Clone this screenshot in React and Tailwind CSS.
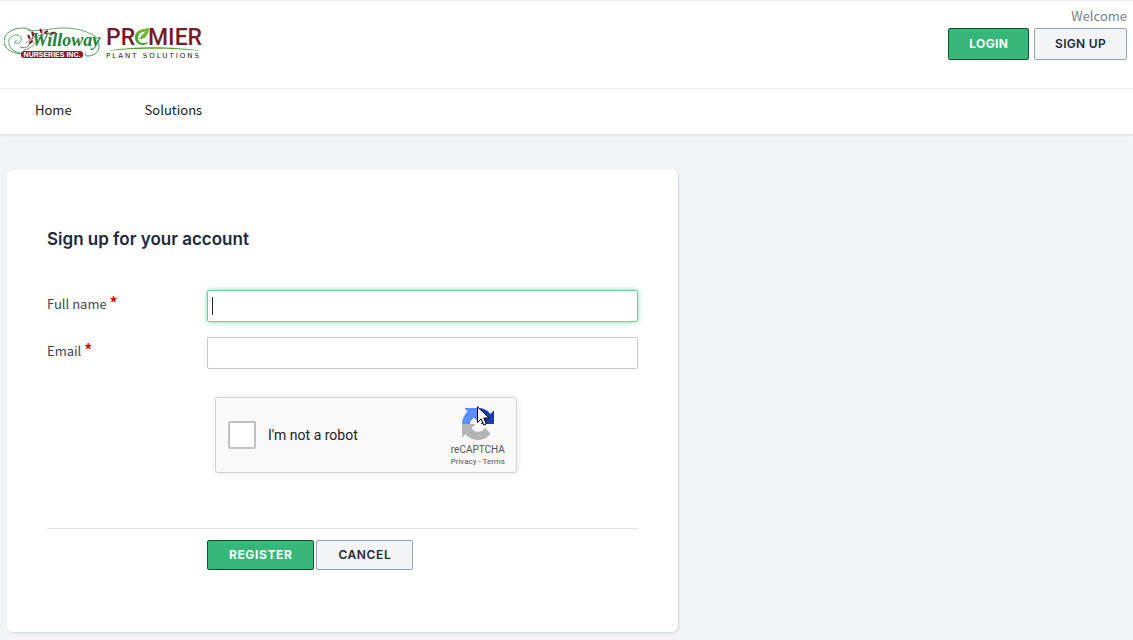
import React from "react";

const BODY = "font-['Noto_Sans_CJK_SC','Noto_Sans',sans-serif]";
const HEAD = "font-[Inter,sans-serif]";
const PRIMARY = "rounded-xs border border-[#14532d] bg-[#36b678] text-white";
const SECONDARY = "rounded-xs border border-[#94a3b8] bg-[#f3f4f6] text-[#1e293b]";

function WillowayLogo() {
  return (
    <svg width="98" height="36" viewBox="0 0 98 36" role="img" aria-label="Willoway Nurseries Inc.">
      <g fill="none" stroke="#3d9147" strokeLinecap="round">
        <path strokeWidth="0.8" d="M24 5C37 7 46 3 60 3C76 3 88 8 94 14" />
        <path strokeWidth="0.9" d="M18 29C6 28 0 23 0 16C0 8 9 3 19 3C29 3 30 12 27 17C25 22 20 24 16 22" />
        <path strokeWidth="0.8" d="M16 28C6 26 4 19 5 15C6 10 14 8 17 12C19 16 14 20 11 18C10 16 12 15 13 16" />
        <path strokeWidth="0.8" d="M20 25C27 24 32 18 36 12" />
        <path strokeWidth="1" d="M93 15C98 21 94 31 84 31C81 31 80 29 82 28" />
      </g>
      <g fill="#84202f">
        <ellipse cx="25" cy="12" rx="1.2" ry="2.6" transform="rotate(-25 25 12)" />
        <ellipse cx="29" cy="9" rx="1.2" ry="2.8" transform="rotate(-10 29 9)" />
        <ellipse cx="37" cy="6" rx="1.2" ry="2.6" transform="rotate(-20 37 6)" />
        <ellipse cx="42" cy="7" rx="1.2" ry="2.6" transform="rotate(60 42 7)" />
        <ellipse cx="49" cy="8" rx="1.2" ry="3" transform="rotate(80 49 8)" />
        <ellipse cx="27" cy="17" rx="1.2" ry="2.6" transform="rotate(60 27 17)" />
      </g>
      <path d="M22 18C28 13 36 9 46 8" fill="none" stroke="#84202f" strokeWidth="0.6" />
      <text x="28" y="21" fontFamily="Liberation Serif, serif" fontStyle="italic" fontWeight="700" fontSize="18" fill="#23803a">Willoway</text>
      <rect x="17" y="26" width="62" height="7" rx="3" fill="#8b1d2c" />
      <text x="48" y="32" textAnchor="middle" fontFamily="Liberation Sans, sans-serif" fontWeight="700" fontSize="7" fill="#fff">NURSERIES INC.</text>
    </svg>
  );
}

function PremierLogo() {
  return (
    <svg width="98" height="36" viewBox="0 0 98 36" role="img" aria-label="Premier Plant Solutions">
      <g fontFamily="Roboto, sans-serif" fontWeight="500" fontSize="23" fill="#741c2b">
        <text x="0" y="20">PR</text>
        <text x="42" y="20">MIER</text>
      </g>
      <path d="M29 12C29 7 33 4 42 4C42 11 39 14 33 14L40 6C34 7 32 10 32 13C32 18 37 19 42 17L41 19C34 22 29 18 29 12Z" fill="#4ca32d" />
      <path d="M30 10C31 6 35 4 43 3C43 9 40 13 33 14L40 6C35 7 32 9 30 10Z" fill="#70b72c" />
      <path d="M1 26C25 21 69 21 95 26C69 23 25 23 1 26Z" fill="#55a23a" />
      <text x="0" y="33" fontFamily="DejaVu Sans, sans-serif" fontSize="7" letterSpacing="2" fill="#1a1a1a">PLANT SOLUTIONS</text>
    </svg>
  );
}

function RecaptchaMark() {
  return (
    <svg width="32" height="32" viewBox="0 0 64 64" aria-hidden="true">
      <path fill="#1c3aa9" d="M64 31.96a32 32 0 0 0-.03-1.37V4.57l-7.2 7.2A31.94 31.94 0 0 0 32.05.06a31.95 31.95 0 0 0-25.4 12.53l11.8 11.92a15.6 15.6 0 0 1 4.78-5.36c2.06-1.6 4.98-2.92 9.03-2.92.49 0 .87.06 1.14.16 5.02.4 9.37 3.17 11.93 7.19l-8.35 8.35L64 31.96" />
      <path fill="#5b8df6" d="M31.86.06a32 32 0 0 0-1.37.04H4.47l7.19 7.19A31.94 31.94 0 0 0 0 32.01a31.95 31.95 0 0 0 12.53 25.4l11.87-11.8a15.6 15.6 0 0 1-5.36-4.78c-1.6-2.06-2.92-4.98-2.92-9.03 0-.49.06-.87.16-1.14.4-5.02 3.17-9.37 7.19-11.93l8.35 8.35.04-27.02" />
      <path fill="#b4b4b4" d="M.06 32a32 32 0 0 0 .03 1.37v26.02l7.2-7.2A31.94 31.94 0 0 0 32 63.9a31.95 31.95 0 0 0 25.4-12.53L45.6 39.45a15.6 15.6 0 0 1-4.78 5.36c-2.06 1.6-4.98 2.92-9.03 2.92-.49 0-.87-.06-1.14-.16-5.02-.4-9.37-3.17-11.93-7.19l8.35-8.35L.06 32" />
    </svg>
  );
}

function Field({ id, label, type, focused }) {
  return (
    <div className="flex">
      <label htmlFor={id} className="w-40 shrink-0 pt-1 text-[13px] leading-5 text-[#3f4650]">
        {label} <span className="text-base leading-4 font-bold text-[#cc1212]">*</span>
      </label>
      <div className="relative grow">
        <input
          id={id}
          type={type}
          required
          autoFocus={focused}
          placeholder=" "
          className="peer block h-8 w-full rounded-xs border border-[#c8c8c8] bg-white px-1 text-[13px] text-[#1e293b] outline-none focus:border-[#74cda0] focus:shadow-[0_0_5px_#36b67899]"
        />
        <span className="pointer-events-none absolute top-[7px] left-[5px] hidden h-[18px] w-px bg-[#1e293b] peer-focus:peer-placeholder-shown:block" />
      </div>
    </div>
  );
}

export default function App() {
  return (
    <div className={`min-h-screen bg-[#f3f4f6] ${BODY}`}>
      <header className="border-b border-[#dfe1e4] bg-white shadow-xs">
        <div className="flex h-[89px] items-start justify-between border-y border-[#ebebeb] pr-1.5 pl-1">
          <a href="#home" className="flex gap-1 pt-6">
            <WillowayLogo />
            <PremierLogo />
          </a>
          <div className="flex flex-col items-end gap-0.5 pt-[5px]">
            <span className="text-[13px] leading-5 text-[#777f87]">Welcome</span>
            <div className={`flex gap-[5px] text-xs ${HEAD}`}>
              <button type="button" className={`h-8 px-5 font-bold tracking-wide ${PRIMARY}`}>LOGIN</button>
              <button type="button" className={`h-8 px-5 font-semibold tracking-wide ${SECONDARY}`}>SIGN UP</button>
            </div>
          </div>
        </div>
        <nav className="flex h-[45px] items-center gap-[73px] pb-1 pl-[35px] text-[13px] leading-5 text-[#1a1a1a]">
          <a href="#home">Home</a>
          <a href="#solutions">Solutions</a>
        </nav>
      </header>

      <main className="px-[7px] pt-[35px] pb-2">
        <form className="max-w-[671px] rounded-md bg-white px-10 pt-[57px] pb-[62px] shadow-[1px_1px_2px_#cbd5e1]">
          <h1 className={`text-[17px] leading-6 font-semibold text-[#1e293b] ${HEAD}`}>Sign up for your account</h1>
          <div className="mt-[39px] flex flex-col gap-[15px]">
            <Field id="full-name" label="Full name" type="text" focused />
            <Field id="email" label="Email" type="email" />
          </div>

          <div className="mt-7 ml-42 flex h-[76px] w-[302px] items-center rounded-[3px] border border-[#d3d3d3] bg-[#f9f9f9] pr-[11px] pl-3 font-[Roboto,sans-serif] shadow-[0_0_4px_1px_#00000014]">
            <input
              id="robot"
              type="checkbox"
              className="size-7 appearance-none rounded-xs border-2 border-[#c1c1c1] bg-white checked:bg-[#36b678]"
            />
            <label htmlFor="robot" className="grow pl-3 text-sm text-[#222]">I'm not a robot</label>
            <div className="flex flex-col items-center pt-1.5 text-[#555]">
              <div className="relative">
                <RecaptchaMark />
                <svg className="absolute -top-0.5 left-[15px]" width="13" height="20" viewBox="0 0 13 20" aria-hidden="true">
                  <path d="M0.5 0.8V16.5L4.2 13L6.8 19L9.3 18L6.8 12H12Z" fill="#fff" stroke="#000" />
                </svg>
              </div>
              <span className="mt-1 text-[10px] leading-3">reCAPTCHA</span>
              <span className="text-[8px] leading-3">
                <a href="#privacy">Privacy</a> - <a href="#terms">Terms</a>
              </span>
            </div>
          </div>

          <div className={`mt-[55px] flex gap-0.5 border-t border-[#e2e2e2] pt-[11px] pl-40 text-xs ${HEAD}`}>
            <button type="submit" className={`h-[30px] px-[21px] font-bold tracking-wider ${PRIMARY}`}>REGISTER</button>
            <button type="button" className={`h-[30px] px-[21px] font-semibold tracking-wider ${SECONDARY}`}>CANCEL</button>
          </div>
        </form>
      </main>
    </div>
  );
}
